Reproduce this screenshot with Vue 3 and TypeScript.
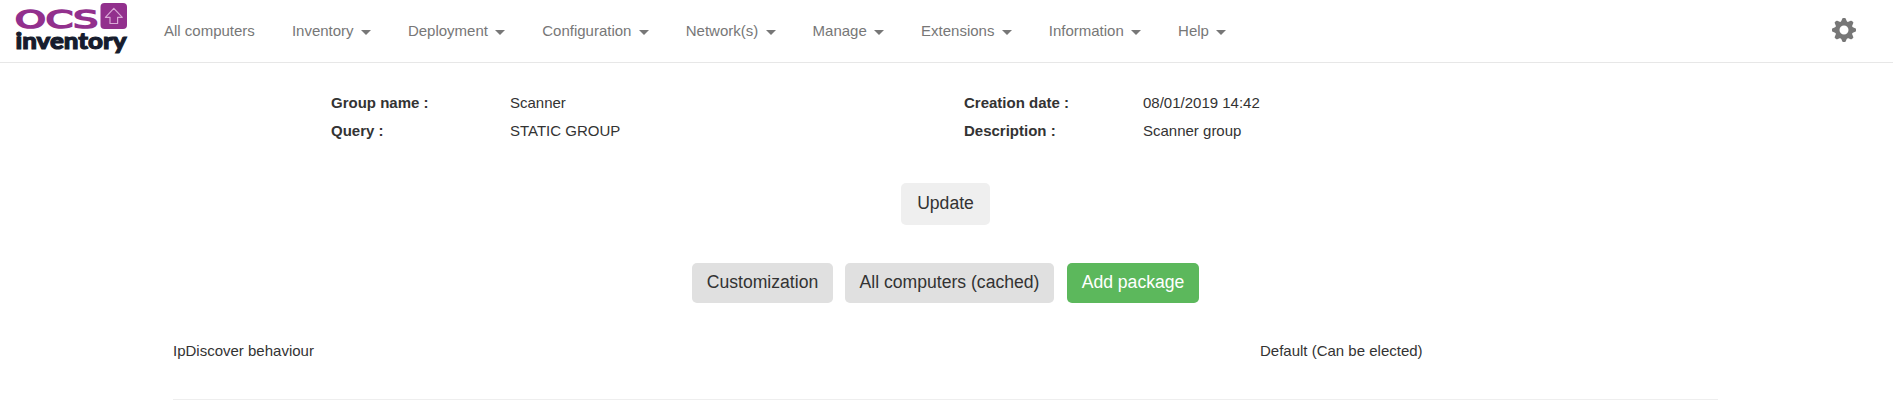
<script setup lang="ts">
interface NavItem {
  label: string
  menu: boolean
}
interface Field {
  label: string
  value: string
}

const navItems: NavItem[] = [
  { label: 'All computers', menu: false },
  { label: 'Inventory', menu: true },
  { label: 'Deployment', menu: true },
  { label: 'Configuration', menu: true },
  { label: 'Network(s)', menu: true },
  { label: 'Manage', menu: true },
  { label: 'Extensions', menu: true },
  { label: 'Information', menu: true },
  { label: 'Help', menu: true },
]

const fields: Field[] = [
  { label: 'Group name :', value: 'Scanner' },
  { label: 'Creation date :', value: '08/01/2019 14:42' },
  { label: 'Query :', value: 'STATIC GROUP' },
  { label: 'Description :', value: 'Scanner group' },
]

const teeth: number[] = [0, 45, 90, 135, 180, 225, 270, 315]
</script>

<template>
  <div class="page">
    <header class="navbar">
      <svg class="logo" width="114" height="54" viewBox="0 0 114 54" aria-label="OCS inventory">
        <text class="logo-top" x="0" y="28.2" textLength="83" lengthAdjust="spacingAndGlyphs">OCS</text>
        <rect x="85.5" y="3" width="26.5" height="26" rx="4" fill="#92308d" />
        <path
          d="M98.8 8.3 L107.3 17.3 H102.6 V23.5 H95 V17.3 H90.4 Z"
          fill="none"
          stroke="#d9a8d6"
          stroke-width="1.2"
          stroke-linejoin="round"
        />
        <text class="logo-bottom" x="0.5" y="48.5" textLength="111" lengthAdjust="spacingAndGlyphs">inventory</text>
      </svg>
      <nav class="nav">
        <a v-for="item in navItems" :key="item.label" class="nav-link">
          {{ item.label }}<span v-if="item.menu" class="caret"></span>
        </a>
      </nav>
      <svg class="gear" width="24" height="24" viewBox="-12 -12 24 24">
        <circle r="6.8" fill="none" stroke="#777" stroke-width="4.6" />
        <path
          v-for="angle in teeth"
          :key="angle"
          d="M-3.2 -7.8 L-1.8 -11.2 Q-1.6 -12 -0.8 -12 H0.8 Q1.6 -12 1.8 -11.2 L3.2 -7.8 Z"
          :transform="`rotate(${angle})`"
          fill="#777"
        />
      </svg>
    </header>

    <dl class="details">
      <div v-for="field in fields" :key="field.label" class="field">
        <dt>{{ field.label }}</dt>
        <dd>{{ field.value }}</dd>
      </div>
    </dl>

    <div class="update-row">
      <button class="btn update">Update</button>
    </div>
    <div class="actions">
      <button class="btn customization">Customization</button>
      <button class="btn computers">All computers (cached)</button>
      <button class="btn package">Add package</button>
    </div>

    <section class="setting">
      <span>IpDiscover behaviour</span>
      <span>Default (Can be elected)</span>
    </section>
  </div>
</template>

<style>
body {
  margin: 0;
  background: #fff;
}
</style>

<style scoped>
.page {
  height: 400px;
  overflow: hidden;
  font-family: "Liberation Sans", Arial, sans-serif;
  font-size: 15px;
  line-height: 20px;
  color: #333;
}
.navbar {
  display: flex;
  height: 62px;
  border-bottom: 1px solid #e7e7e7;
  padding-left: 15px;
}
.logo {
  flex: none;
}
.logo-top {
  font: 24.5px "DejaVu Sans", "Liberation Sans", sans-serif;
  fill: #92308d;
  stroke: #92308d;
  stroke-width: 1.7px;
}
.logo-bottom {
  font: 900 23.5px Lato, "Open Sans", sans-serif;
  fill: #161c2d;
  stroke: #161c2d;
  stroke-width: 1.1px;
}
.nav {
  display: flex;
  gap: 37px;
  margin-left: 35px;
  padding-top: 21px;
}
.nav-link {
  display: flex;
  align-items: center;
  height: 20px;
  color: #777;
  white-space: nowrap;
}
.caret {
  margin: 3px 0 0 7.3px;
  border-top: 5px solid #777;
  border-left: 5px solid transparent;
  border-right: 5px solid transparent;
}
.gear {
  margin: 18px 37px 0 auto;
}
.details {
  display: grid;
  grid-template-columns: 633px 633px;
  row-gap: 8px;
  margin: 30px 0 0 331px;
}
.field {
  display: flex;
}
dt {
  width: 179px;
  font-weight: bold;
}
dd {
  margin: 0;
}
.btn {
  height: 40px;
  padding: 0 0 2px;
  border: 0;
  border-radius: 5px;
  background: #e0e0e0;
  color: #333;
  font: 17.6px "Liberation Sans", Arial, sans-serif;
}
.update-row {
  display: flex;
  margin: 42px 0 0 901px;
}
.update {
  width: 89px;
  height: 42px;
  background: #efefef;
}
.actions {
  display: flex;
  margin: 38px 0 0 692px;
}
.customization {
  width: 141px;
  margin-right: 12px;
}
.computers {
  width: 209px;
  margin-right: 13px;
}
.package {
  width: 132px;
  background: #5cb85c;
  color: #fff;
}
.setting {
  display: grid;
  grid-template-columns: 1087px 1fr;
  width: 1545px;
  height: 58px;
  margin: 38px 0 0 173px;
  border-bottom: 1px solid #eee;
}
</style>
